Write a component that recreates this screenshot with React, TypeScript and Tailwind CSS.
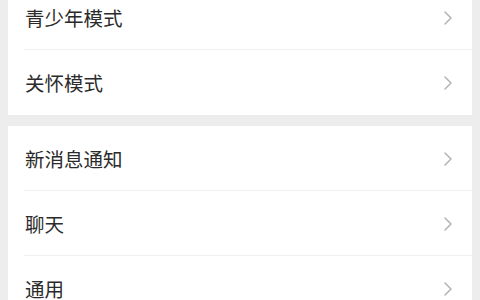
import React from "react";

const Chevron = () => (
  <svg width="10" height="16" viewBox="0 0 10 16" fill="none" className="shrink-0">
    <path d="M2 2L8 8L2 14" stroke="#b3b3b3" strokeWidth="1.5" strokeLinecap="round" strokeLinejoin="round" />
  </svg>
);

const Row = ({ label, last }: { label: string; last?: boolean }) => (
  <div className="relative flex h-[65px] items-center justify-between pl-[17px] pr-[19px]">
    <span className="text-[19.5px] leading-none text-[#2b2b2b]">{label}</span>
    <Chevron />
    {!last && <div className="absolute bottom-0 left-[16px] right-0 h-px bg-[#f0f0f0]" />}
  </div>
);

export default function App() {
  return (
    <div
      className="h-[300px] w-[480px] overflow-hidden bg-[#ededed]"
      style={{ fontFamily: '"Noto Sans CJK SC", "Noto Sans", sans-serif' }}
    >
      <div className="-mt-[15px] flex flex-col gap-[11px] px-[8px]">
        <div className="bg-white">
          <Row label="青少年模式" />
          <Row label="关怀模式" last />
        </div>
        <div className="bg-white">
          <Row label="新消息通知" />
          <Row label="聊天" />
          <Row label="通用" last />
        </div>
      </div>
    </div>
  );
}
